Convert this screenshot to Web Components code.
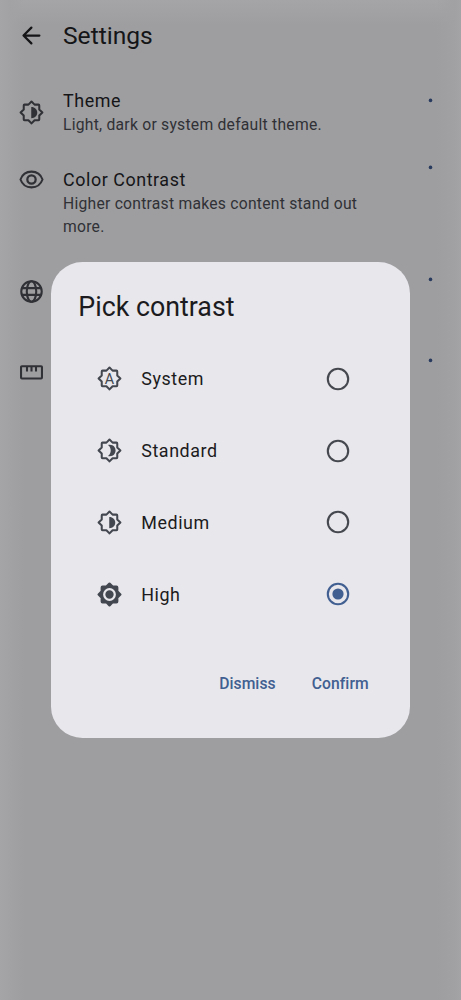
<!DOCTYPE html>
<html lang="en">
<head>
<meta charset="utf-8">
<title>Settings</title>
<style>
html,body{margin:0;height:100%;overflow:hidden;font-family:Roboto,sans-serif;background:#9e9e9f}
</style>
</head>
<body>
<settings-page>
  <app-bar>Settings</app-bar>
  <setting-row icon="medium" style="--h:67px;--pad:6px"><span slot="title">Theme</span>Light, dark or system default theme.</setting-row>
  <setting-row icon="eye" style="--h:112px;--pad:18px"><span slot="title">Color Contrast</span>Higher contrast makes content stand out more.</setting-row>
  <setting-row icon="globe" style="--h:81px"></setting-row>
  <setting-row icon="ruler" style="--h:80px"></setting-row>
  <contrast-dialog slot="overlay">
    <span slot="title">Pick contrast</span>
    <contrast-option icon="system">System</contrast-option>
    <contrast-option icon="standard">Standard</contrast-option>
    <contrast-option icon="medium">Medium</contrast-option>
    <contrast-option icon="high" checked>High</contrast-option>
    <text-button slot="actions">Dismiss</text-button>
    <text-button slot="actions">Confirm</text-button>
  </contrast-dialog>
</settings-page>
<script>
const burst = '<path d="M12 2.3 14.75 5H18.2Q18.900 5 18.900 5.700V9.250L21.700 12 18.900 14.750V18.200Q18.900 18.900 18.200 18.900H14.750L12 21.700 9.250 18.900H5.800Q5.100 18.900 5.100 18.200V14.750L2.300 12 5.100 9.250V5.700Q5.100 5 5.800 5H9.250Z"';
const line = 'fill="none" stroke="currentColor" stroke-width="2" stroke-linejoin="round" stroke-linecap="round"';
const icons = {
  back: `<path d="M19 12H5.2M11.9 5 4.9 12l7 7" ${line}/>`,
  system: `${burst} ${line} style="stroke-width:1.8"/><text x="12" y="16.5" text-anchor="middle" font-family="Roboto" font-size="12.8" fill="currentColor">A</text>`,
  standard: `${burst} ${line} style="stroke-width:1.8"/><path d="M10.6 7.1C15 6.1 17.4 9 17.4 12s-2.4 5.9-6.8 4.9c1.7-1.2 2.5-2.9 2.5-4.9s-.8-3.7-2.5-4.9Z" fill="currentColor"/>`,
  medium: `${burst} ${line} style="stroke-width:1.8"/><path d="M11.8 7c3.2 0 5.3 2.2 5.3 5s-2.1 5-5.3 5Z" fill="currentColor"/>`,
  high: `${burst} ${line} style="fill:currentColor"/><circle cx="12" cy="12" r="4.7" fill="none" stroke="#e8e7ec" stroke-width="2"/>`,
  eye: `<path d="M12 5C7.4 5 3.700 7.800 2.200 12c1.500 4.200 5.200 7 9.800 7s8.300-2.800 9.800-7C20.300 7.800 16.600 5 12 5Z" ${line} style="stroke-width:1.8"/><circle cx="12" cy="12" r="3.700" ${line}/>`,
  globe: `<g ${line} style="stroke-width:1.850"><circle cx="12" cy="12" r="9.100"/><ellipse cx="12" cy="12" rx="4.200" ry="9.100"/><path d="M3.600 9h16.800M3.600 15h16.800"/></g>`,
  ruler: `<g ${line} style="stroke-width:1.850"><rect x="2.700" y="6.400" width="18.600" height="10.900" rx=".8"/><path d="M8 7v4M12 7v4M16 7v4" stroke-linecap="butt"/></g>`
};
function define(name, html, setup) {
  const t = document.createElement('template');
  t.innerHTML = html;
  customElements.define(name, class extends HTMLElement {
    connectedCallback() {
      if (this.shadowRoot) return;
      this.attachShadow({mode:'open'}).append(t.content.cloneNode(true));
      if (setup) setup(this, this.shadowRoot);
    }
  });
}
define('ui-icon', '<style>:host{display:block;width:27px;height:27px;flex:none}svg{display:block;width:100%;height:100%}</style><svg viewBox="0 0 24 24" aria-hidden="true"></svg>',
  (el, root) => root.querySelector('svg').innerHTML = icons[el.getAttribute('name')]);
define('settings-page', `<style>
:host{display:block;position:relative;width:100%;height:100vh;overflow:hidden;
background:linear-gradient(90deg,#a5a5a7 0,#a2a2a4 10px,#9e9e9f00 24px,#9e9e9f00 436px,#a1a1a3 455px,#a4a4a6 461px),linear-gradient(#a5a5a7,#9e9ea0 25px)}
</style><slot></slot><slot name="overlay"></slot>`);
define('app-bar', `<style>
:host{display:flex;align-items:center;height:71px;margin-bottom:11px;padding-left:18px;gap:18px;color:#151518;font-size:24.6px}
</style><ui-icon name="back"></ui-icon><span><slot></slot></span>`);
define('setting-row', `<style>
:host{display:grid;grid-template-columns:27px 310px 6px;column-gap:18px;height:var(--h);padding-left:18px;color:#303136}
ui-icon{margin-top:17px}
.copy{padding-top:var(--pad)}
.title{font-size:17.900px;line-height:26px;letter-spacing:.56px;color:#151518}
.sub{font-size:15.700px;line-height:22.500px;letter-spacing:.24px}
.dot{display:block;width:6px;height:6px;margin:15px 0 0 36px}
</style><ui-icon></ui-icon><div class="copy"><div class="title"><slot name="title"></slot></div><div class="sub"><slot></slot></div></div><svg class="dot" viewBox="0 0 6 6"><circle cx="3.500" cy="3.400" r="1.800" fill="#283a5e"/></svg>`,
  (el, root) => root.querySelector('ui-icon').replaceWith(Object.assign(document.createElement('template'), {innerHTML:`<ui-icon name="${el.getAttribute('icon')}"></ui-icon>`}).content));
define('contrast-dialog', `<style>
:host{position:absolute;inset:0;display:flex;align-items:center;justify-content:center}
section{box-sizing:border-box;width:358.500px;height:476px;border-radius:31.500px;background:#e8e7ec;color:#1b1b20;padding:27px 27px 0}
h1{margin:0 0 18px;font-size:26.800px;line-height:36px;font-weight:400}
footer{display:flex;justify-content:flex-end;gap:36px;padding:43px 14px 0 0}
</style><section role="dialog"><h1><slot name="title"></slot></h1><slot></slot><footer><slot name="actions"></slot></footer></section>`);
define('contrast-option', `<style>
:host{display:flex;align-items:center;height:71.800px;padding:0 33.300px 0 18px;color:#43474f}
span{margin-left:18px;flex:1;font-size:17.900px;letter-spacing:.56px;color:#1b1b20}
svg{display:block;width:24px;height:24px;overflow:visible}
</style><ui-icon></ui-icon><span><slot></slot></span><svg viewBox="0 0 24 24"></svg>`,
  (el, root) => {
    root.querySelector('ui-icon').replaceWith(Object.assign(document.createElement('template'), {innerHTML:`<ui-icon name="${el.getAttribute('icon')}"></ui-icon>`}).content);
    const on = el.hasAttribute('checked');
    root.querySelector('svg').innerHTML = `<circle cx="13" cy="12" r="10.200" fill="none" stroke="${on ? '#415f91' : '#46484f'}" stroke-width="2.100"/>` + (on ? '<circle cx="13" cy="12" r="5.600" fill="#415f91"/>' : '');
  });
define('text-button', `<style>:host{display:block;font-size:15.700px;line-height:22px;font-weight:500;letter-spacing:.06px;color:#415f91}</style><slot></slot>`);
</script>
</body>
</html>
